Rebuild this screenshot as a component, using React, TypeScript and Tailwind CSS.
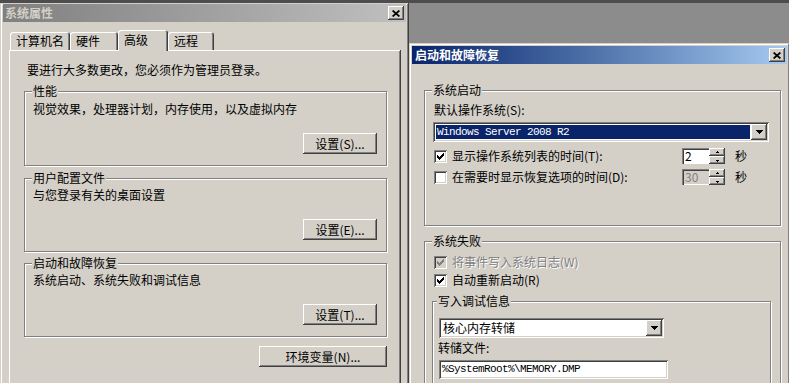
import React from 'react';

// classic win2k bevels
const raised =
  'shadow-[inset_-1px_-1px_#404040,inset_1px_1px_#ffffff,inset_-2px_-2px_#808080,inset_2px_2px_#d4d0c8]';
const windowFrame =
  'shadow-[inset_-1px_-1px_#404040,inset_1px_1px_#d4d0c8,inset_-2px_-2px_#808080,inset_2px_2px_#ffffff]';
const sunken =
  'shadow-[inset_1px_1px_#808080,inset_-1px_-1px_#ffffff,inset_2px_2px_#404040,inset_-2px_-2px_#d4d0c8]';

function CloseButton() {
  return (
    <div className={`w-[16px] h-[14px] bg-[#d4d0c8] flex items-center justify-center ${raised}`}>
      <svg width="8" height="7" viewBox="0 0 8 7">
        <path d="M0.6 0.5 L7.4 6.5 M7.4 0.5 L0.6 6.5" stroke="#000" strokeWidth="1.7" />
      </svg>
    </div>
  );
}

function TitleBar({ title, active }: { title: string; active?: boolean }) {
  return (
    <div
      className={
        active
          ? 'h-[18px] flex items-center justify-between pl-[3px] pr-[2px] bg-gradient-to-r from-[#0a246a] to-[#a6caf0] text-white'
          : 'h-[18px] flex items-center justify-between pl-[2px] pr-[2px] bg-gradient-to-r from-[#808080] to-[#c0c0c0] text-[#d4d0c8]'
      }
    >
      <span className="font-bold leading-[14px]">{title}</span>
      <CloseButton />
    </div>
  );
}

function Tab({ label, width, active }: { label: string; width: string; active?: boolean }) {
  return (
    <div
      className={
        active
          ? `${width} h-[21px] -mb-[1px] relative z-10 bg-[#d4d0c8] pl-[6px] pt-[3px] leading-[14px] rounded-t-[3px] shadow-[inset_1px_1px_#ffffff,inset_-1px_0_#404040,inset_-2px_0_#808080]`
          : `${width} h-[18px] bg-[#d4d0c8] pl-[6px] pt-[2px] leading-[14px] rounded-t-[3px] shadow-[inset_1px_1px_#ffffff,inset_-1px_0_#404040,inset_-2px_0_#808080]`
      }
    >
      {label}
    </div>
  );
}

function Group({
  title,
  className,
  inset = 'pl-[7px] pr-[9px]',
  children,
}: {
  title: string;
  className: string;
  inset?: string;
  children: React.ReactNode;
}) {
  return (
    <fieldset
      className={`border border-[#808080] shadow-[inset_1px_1px_#ffffff,1px_1px_#ffffff] ${inset} ${className}`}
    >
      <legend className="px-[1px] bg-[#d4d0c8] leading-[14px]">{title}</legend>
      {children}
    </fieldset>
  );
}

function Button({ children, className }: { children: React.ReactNode; className: string }) {
  return (
    <button className={`h-[21px] bg-[#d4d0c8] text-[12px] leading-[14px] text-black ${raised} ${className}`}>
      {children}
    </button>
  );
}

function DropArrow() {
  return (
    <div className={`w-[16px] h-full bg-[#d4d0c8] flex items-center justify-center ${raised}`}>
      <svg width="7" height="4" viewBox="0 0 7 4">
        <path d="M0 0h7v1H0z M1 1h5v1H1z M2 2h3v1H2z M3 3h1v1H3z" fill="#000" />
      </svg>
    </div>
  );
}

function Check({ checked, disabled }: { checked?: boolean; disabled?: boolean }) {
  return (
    <div className={`w-[13px] h-[13px] shrink-0 ${disabled ? 'bg-[#d4d0c8]' : 'bg-white'} ${sunken}`}>
      {checked && (
        <svg width="13" height="13" viewBox="0 0 13 13">
          <path
            d="M3 5h1v3H3z M4 6h1v3H4z M5 7h1v3H5z M6 6h1v3H6z M7 5h1v3H7z M8 4h1v3H8z M9 3h1v3H9z"
            fill={disabled ? '#808080' : '#000'}
          />
        </svg>
      )}
    </div>
  );
}

function SpinArrow({ up }: { up?: boolean }) {
  return (
    <div className={`h-[8px] w-full bg-[#d4d0c8] flex items-center justify-center ${raised}`}>
      <svg width="5" height="3" viewBox="0 0 5 3">
        <path d={up ? 'M2 0h1v1H2z M1 1h3v1H1z' : 'M1 1h3v1H1z M2 2h1v1H2z'} fill="#000" />
      </svg>
    </div>
  );
}

function Spinner({ value, disabled }: { value: string; disabled?: boolean }) {
  return (
    <div className="flex h-[16px] w-[43px] shrink-0">
      <div
        className={`w-[27px] h-full pl-[3px] leading-[16px] shadow-[inset_1px_1px_#808080,inset_2px_2px_#404040,inset_0_-1px_#ffffff] ${
          disabled ? 'bg-[#d4d0c8] text-[#808080]' : 'bg-white text-black'
        }`}
      >
        {value}
      </div>
      <div className="w-[16px] flex flex-col">
        <SpinArrow up />
        <SpinArrow />
      </div>
    </div>
  );
}

export default function App() {
  return (
    <div className="w-[789px] h-[383px] overflow-hidden bg-[#8c8c8c] flex flex-col text-[12px] leading-[14px] text-black font-['Noto_Sans_CJK_SC','Noto_Sans',sans-serif]">
      <div className="h-[3px] w-full bg-[#4d4d4d] shrink-0" />
      <div className="flex">
        {/* System properties window */}
        <div className={`w-[409px] h-[400px] shrink-0 bg-[#d4d0c8] px-[3px] pt-[1px] ${windowFrame}`}>
          <TitleBar title="系统属性" />
          <div className="mt-[8px] ml-[7px] flex items-end">
            <Tab label="计算机名" width="w-[60px]" />
            <Tab label="硬件" width="w-[48px]" />
            <Tab label="高级" width="w-[50px]" active />
            <Tab label="远程" width="w-[46px]" />
          </div>
          <div className={`ml-[6px] w-[392px] h-[360px] bg-[#d4d0c8] pt-[13px] pl-[15px] ${raised}`}>
            <p className="pl-[3px]">要进行大多数更改，您必须作为管理员登录。</p>

            <Group title="性能" className="mt-[7px] w-[363px] h-[82px]">
              <p className="mt-[4px] pl-[1px]">视觉效果，处理器计划，内存使用，以及虚拟内存</p>
              <div className="mt-[17px] flex justify-end">
                <Button className="w-[74px]">设置(S)...</Button>
              </div>
            </Group>

            <Group title="用户配置文件" className="mt-[5px] w-[363px] h-[81px]">
              <p className="mt-[3px] pl-[1px]">与您登录有关的桌面设置</p>
              <div className="mt-[17px] flex justify-end">
                <Button className="w-[74px]">设置(E)...</Button>
              </div>
            </Group>

            <Group title="启动和故障恢复" className="mt-[4px] w-[363px] h-[81px]">
              <p className="mt-[3px] pl-[1px]">系统启动、系统失败和调试信息</p>
              <div className="mt-[17px] flex justify-end">
                <Button className="w-[74px]">设置(T)...</Button>
              </div>
            </Group>

            <div className="mt-[9px] w-[363px] flex justify-end">
              <Button className="w-[128px]">环境变量(N)...</Button>
            </div>
          </div>
        </div>

        {/* Startup and recovery dialog */}
        <div className="flex flex-col">
          <div className="h-[40px]" />
          <div className={`w-[381px] h-[360px] bg-[#d4d0c8] p-[3px] ${windowFrame}`}>
            <TitleBar title="启动和故障恢复" active />
            <div className="pl-[12px]">
              <Group title="系统启动" className="mt-[19px] w-[357px] h-[143px]">
                <p className="mt-[6px] pl-[2px]">默认操作系统(S):</p>
                <div className={`mt-[5px] ml-[1px] w-[336px] h-[20px] bg-white p-[2px] flex ${sunken}`}>
                  <div className="flex-1 p-[1px]">
                    <div className="h-full bg-[#0a246a] text-white pl-[1px] leading-[14px] font-['Liberation_Mono',monospace] text-[11px] tracking-[-0.6px]">
                      Windows Server 2008 R2
                    </div>
                  </div>
                  <DropArrow />
                </div>
                <div className="mt-[6px] h-[16px] flex items-center">
                  <div className="w-[250px] flex items-center pl-[2px]">
                    <Check checked />
                    <span className="ml-[5px]">显示操作系统列表的时间(T):</span>
                  </div>
                  <Spinner value="2" />
                  <span className="ml-[10px]">秒</span>
                </div>
                <div className="mt-[5px] h-[16px] flex items-center">
                  <div className="w-[250px] flex items-center pl-[2px]">
                    <Check />
                    <span className="ml-[5px]">在需要时显示恢复选项的时间(D):</span>
                  </div>
                  <Spinner value="30" disabled />
                  <span className="ml-[10px]">秒</span>
                </div>
              </Group>

              <Group title="系统失败" className="mt-[8px] w-[357px] h-[200px]">
                <div className="mt-[7px] h-[14px] flex items-center pl-[2px]">
                  <Check checked disabled />
                  <span className="ml-[5px] text-[#808080] [text-shadow:1px_1px_0_#ffffff]">将事件写入系统日志(W)</span>
                </div>
                <div className="mt-[4px] h-[14px] flex items-center pl-[2px]">
                  <Check checked />
                  <span className="ml-[5px]">自动重新启动(R)</span>
                </div>

                <Group title="写入调试信息" className="mt-[7px] w-[339px] h-[100px]" inset="pl-[4px] pr-[4px]">
                  <div className={`mt-[10px] ml-[2px] w-[225px] h-[20px] bg-white p-[2px] flex ${sunken}`}>
                    <div className="flex-1 pl-[2px] leading-[16px]">核心内存转储</div>
                    <DropArrow />
                  </div>
                  <p className="mt-[3px] ml-[1px]">转储文件:</p>
                  <div
                    className={`mt-[5px] ml-[2px] w-[229px] h-[19px] bg-white pl-[3px] leading-[19px] font-['Liberation_Mono',monospace] text-[11px] tracking-[-0.6px] ${sunken}`}
                  >
                    %SystemRoot%\MEMORY.DMP
                  </div>
                </Group>
              </Group>
            </div>
          </div>
        </div>
      </div>
    </div>
  );
}
